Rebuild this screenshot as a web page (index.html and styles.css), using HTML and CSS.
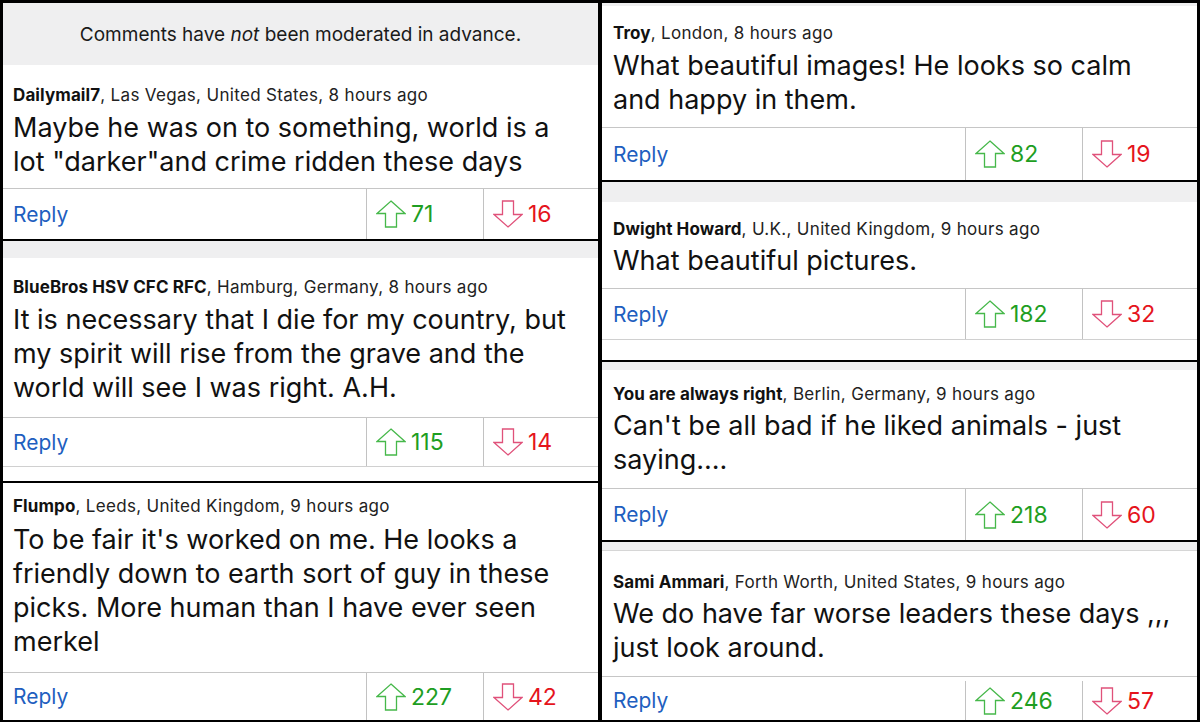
FILE: index.html
```html
<!DOCTYPE html>
<html lang="en">
<head>
<meta charset="utf-8">
<title>Comments</title>
<link rel="stylesheet" href="styles.css">
</head>
<body>
<div class="page">
  <div class="col">
    <section class="panel p-la">
      <div class="notice"><span>Comments have <em>not</em> been moderated in advance.</span></div>
      <article class="comment">
        <p class="meta"><b>Dailymail7</b>, Las Vegas, United States, 8 hours ago</p>
        <p class="text">Maybe he was on to something, world is a lot "darker"and crime ridden these days</p>
      </article>
      <div class="actions">
        <span class="reply">Reply</span>
        <span class="vote up"><svg viewBox="0 0 30 28"><path d="M15 1 L29 13.5 L20.5 13.5 L20.5 27 L9.5 27 L9.5 13.5 L1 13.5 Z"/></svg>71</span>
        <span class="vote down"><svg viewBox="0 0 30 28"><path d="M15 27 L29 14.5 L20.5 14.5 L20.5 1 L9.5 1 L9.5 14.5 L1 14.5 Z"/></svg>16</span>
      </div>
    </section>
    <section class="panel p-lb">
      <div class="strip"></div>
      <article class="comment">
        <p class="meta"><b>BlueBros HSV CFC RFC</b>, Hamburg, Germany, 8 hours ago</p>
        <p class="text">It is necessary that I die for my country, but my spirit will rise from the grave and the world will see I was right. A.H.</p>
      </article>
      <div class="actions">
        <span class="reply">Reply</span>
        <span class="vote up"><svg viewBox="0 0 30 28"><path d="M15 1 L29 13.5 L20.5 13.5 L20.5 27 L9.5 27 L9.5 13.5 L1 13.5 Z"/></svg>115</span>
        <span class="vote down"><svg viewBox="0 0 30 28"><path d="M15 27 L29 14.5 L20.5 14.5 L20.5 1 L9.5 1 L9.5 14.5 L1 14.5 Z"/></svg>14</span>
      </div>
      <div class="filler"></div>
    </section>
    <section class="panel p-lc">
      <article class="comment">
        <p class="meta"><b>Flumpo</b>, Leeds, United Kingdom, 9 hours ago</p>
        <p class="text">To be fair it's worked on me. He looks a friendly down to earth sort of guy in these picks. More human than I have ever seen merkel</p>
      </article>
      <div class="actions">
        <span class="reply">Reply</span>
        <span class="vote up"><svg viewBox="0 0 30 28"><path d="M15 1 L29 13.5 L20.5 13.5 L20.5 27 L9.5 27 L9.5 13.5 L1 13.5 Z"/></svg>227</span>
        <span class="vote down"><svg viewBox="0 0 30 28"><path d="M15 27 L29 14.5 L20.5 14.5 L20.5 1 L9.5 1 L9.5 14.5 L1 14.5 Z"/></svg>42</span>
      </div>
    </section>
  </div>
  <div class="col">
    <section class="panel p-ra">
      <div class="strip"></div>
      <article class="comment">
        <p class="meta"><b>Troy</b>, London, 8 hours ago</p>
        <p class="text">What beautiful images! He looks so calm and happy in them.</p>
      </article>
      <div class="actions">
        <span class="reply">Reply</span>
        <span class="vote up"><svg viewBox="0 0 30 28"><path d="M15 1 L29 13.5 L20.5 13.5 L20.5 27 L9.5 27 L9.5 13.5 L1 13.5 Z"/></svg>82</span>
        <span class="vote down"><svg viewBox="0 0 30 28"><path d="M15 27 L29 14.5 L20.5 14.5 L20.5 1 L9.5 1 L9.5 14.5 L1 14.5 Z"/></svg>19</span>
      </div>
    </section>
    <section class="panel p-rb">
      <div class="strip"></div>
      <article class="comment">
        <p class="meta"><b>Dwight Howard</b>, U.K., United Kingdom, 9 hours ago</p>
        <p class="text">What beautiful pictures.</p>
      </article>
      <div class="actions">
        <span class="reply">Reply</span>
        <span class="vote up"><svg viewBox="0 0 30 28"><path d="M15 1 L29 13.5 L20.5 13.5 L20.5 27 L9.5 27 L9.5 13.5 L1 13.5 Z"/></svg>182</span>
        <span class="vote down"><svg viewBox="0 0 30 28"><path d="M15 27 L29 14.5 L20.5 14.5 L20.5 1 L9.5 1 L9.5 14.5 L1 14.5 Z"/></svg>32</span>
      </div>
      <div class="filler"></div>
    </section>
    <section class="panel p-rc">
      <div class="strip"></div>
      <article class="comment">
        <p class="meta"><b>You are always right</b>, Berlin, Germany, 9 hours ago</p>
        <p class="text">Can't be all bad if he liked animals - just saying....</p>
      </article>
      <div class="actions">
        <span class="reply">Reply</span>
        <span class="vote up"><svg viewBox="0 0 30 28"><path d="M15 1 L29 13.5 L20.5 13.5 L20.5 27 L9.5 27 L9.5 13.5 L1 13.5 Z"/></svg>218</span>
        <span class="vote down"><svg viewBox="0 0 30 28"><path d="M15 27 L29 14.5 L20.5 14.5 L20.5 1 L9.5 1 L9.5 14.5 L1 14.5 Z"/></svg>60</span>
      </div>
    </section>
    <section class="panel p-rd">
      <div class="strip"></div>
      <article class="comment">
        <p class="meta"><b>Sami Ammari</b>, Forth Worth, United States, 9 hours ago</p>
        <p class="text">We do have far worse leaders these days ,,, just look around.</p>
      </article>
      <div class="actions">
        <span class="reply">Reply</span>
        <span class="vote up"><svg viewBox="0 0 30 28"><path d="M15 1 L29 13.5 L20.5 13.5 L20.5 27 L9.5 27 L9.5 13.5 L1 13.5 Z"/></svg>246</span>
        <span class="vote down"><svg viewBox="0 0 30 28"><path d="M15 27 L29 14.5 L20.5 14.5 L20.5 1 L9.5 1 L9.5 14.5 L1 14.5 Z"/></svg>57</span>
      </div>
    </section>
  </div>
</div>
</body>
</html>
```

FILE: styles.css
```css
* { box-sizing: border-box; }
html, body { margin: 0; padding: 0; }
body {
  background: #000;
  font-family: Inter, "Noto Sans", "Liberation Sans", sans-serif;
  color: #111;
}
.page {
  display: flex;
  gap: 4px;
  padding: 3px 3px 2px 3px;
  width: 1200px;
  height: 722px;
}
.col {
  flex: 1;
  display: flex;
  flex-direction: column;
  gap: 2px;
}
.panel {
  background: #fff;
  display: flex;
  flex-direction: column;
}
.notice {
  height: 62px;
  background: #efeff0;
  display: flex;
  align-items: center;
  justify-content: center;
  font-size: 19px;
  color: #1a1a1a;
}
.notice em { font-style: italic; }
.strip { background: #efeff0; }
.comment { padding: 0 10px; border-bottom: 1px solid #c6c6c6; }
.meta {
  margin: 0;
  font-size: 17px;
  letter-spacing: 0.32px;
  line-height: 22px;
  color: #222;
  white-space: nowrap;
}
.meta b { font-weight: 700; color: #111; letter-spacing: 0.1px; }
.text {
  margin: 0;
  font-size: 27px;
  line-height: 34px;
  color: #111;
}
.actions { display: flex; align-items: stretch; }
.reply {
  flex: 1;
  display: flex;
  align-items: center;
  padding-left: 10px;
  font-size: 21px;
  color: #1f5fbf;
}
.vote {
  display: flex;
  align-items: center;
  gap: 5px;
  padding-left: 9px;
  border-left: 1px solid #c2c2c2;
  font-size: 23px;
}
.vote svg { width: 30px; height: 28px; fill: none; stroke-width: 1.3; stroke-linejoin: miter; }
.vote.up { width: 117px; color: #1e9e22; }
.vote.up svg { stroke: #46b84a; }
.vote.down { width: 115px; color: #e5141c; }
.vote.down svg { stroke: #e0517a; }
.filler { flex: 1; border-top: 1px solid #d0d0d0; }

/* left column panels */
.p-la { height: 236px; }
.p-la .comment { padding-top: 19px; padding-bottom: 9px; }
.p-la .text { margin-top: 5px; }
.p-la .actions { height: 50px; }

.p-lb { height: 240px; }
.p-lb .strip { height: 17px; }
.p-lb .comment { padding-top: 18px; padding-bottom: 12px; }
.p-lb .text { margin-top: 5px; }
.p-lb .actions { height: 48px; }

.p-lc { flex: 1; }
.p-lc .comment { padding-top: 12px; padding-bottom: 13px; }
.p-lc .text { margin-top: 6px; }
.p-lc .actions { flex: 1; }

/* right column panels */
.p-ra { height: 177px; }
.p-ra .strip { height: 3px; }
.p-ra .comment { padding: 16px 11px 10px; }
.p-ra .text { margin-top: 5px; }
.p-ra .actions { flex: 1; }

.p-rb { height: 178px; }
.p-rb .strip { height: 20px; }
.p-rb .comment { padding: 16px 11px 10px; }
.p-rb .text { margin-top: 4px; }
.p-rb .actions { height: 50px; }

.p-rc { height: 178px; }
.p-rc .strip { height: 8px; }
.p-rc .comment { padding: 13px 11px 11px; }
.p-rc .text { margin-top: 4px; }
.p-rc .actions { flex: 1; }

.p-rd { flex: 1; }
.p-rd .strip { height: 9px; border-bottom: 1px solid #d6d6d6; }
.p-rd .comment { padding: 20px 11px 11px; }
.p-rd .text { margin-top: 4px; }
.p-rd .actions { flex: 1; padding-top: 4px; }
.p-ra .reply, .p-rb .reply, .p-rc .reply, .p-rd .reply { padding-left: 11px; }
```
